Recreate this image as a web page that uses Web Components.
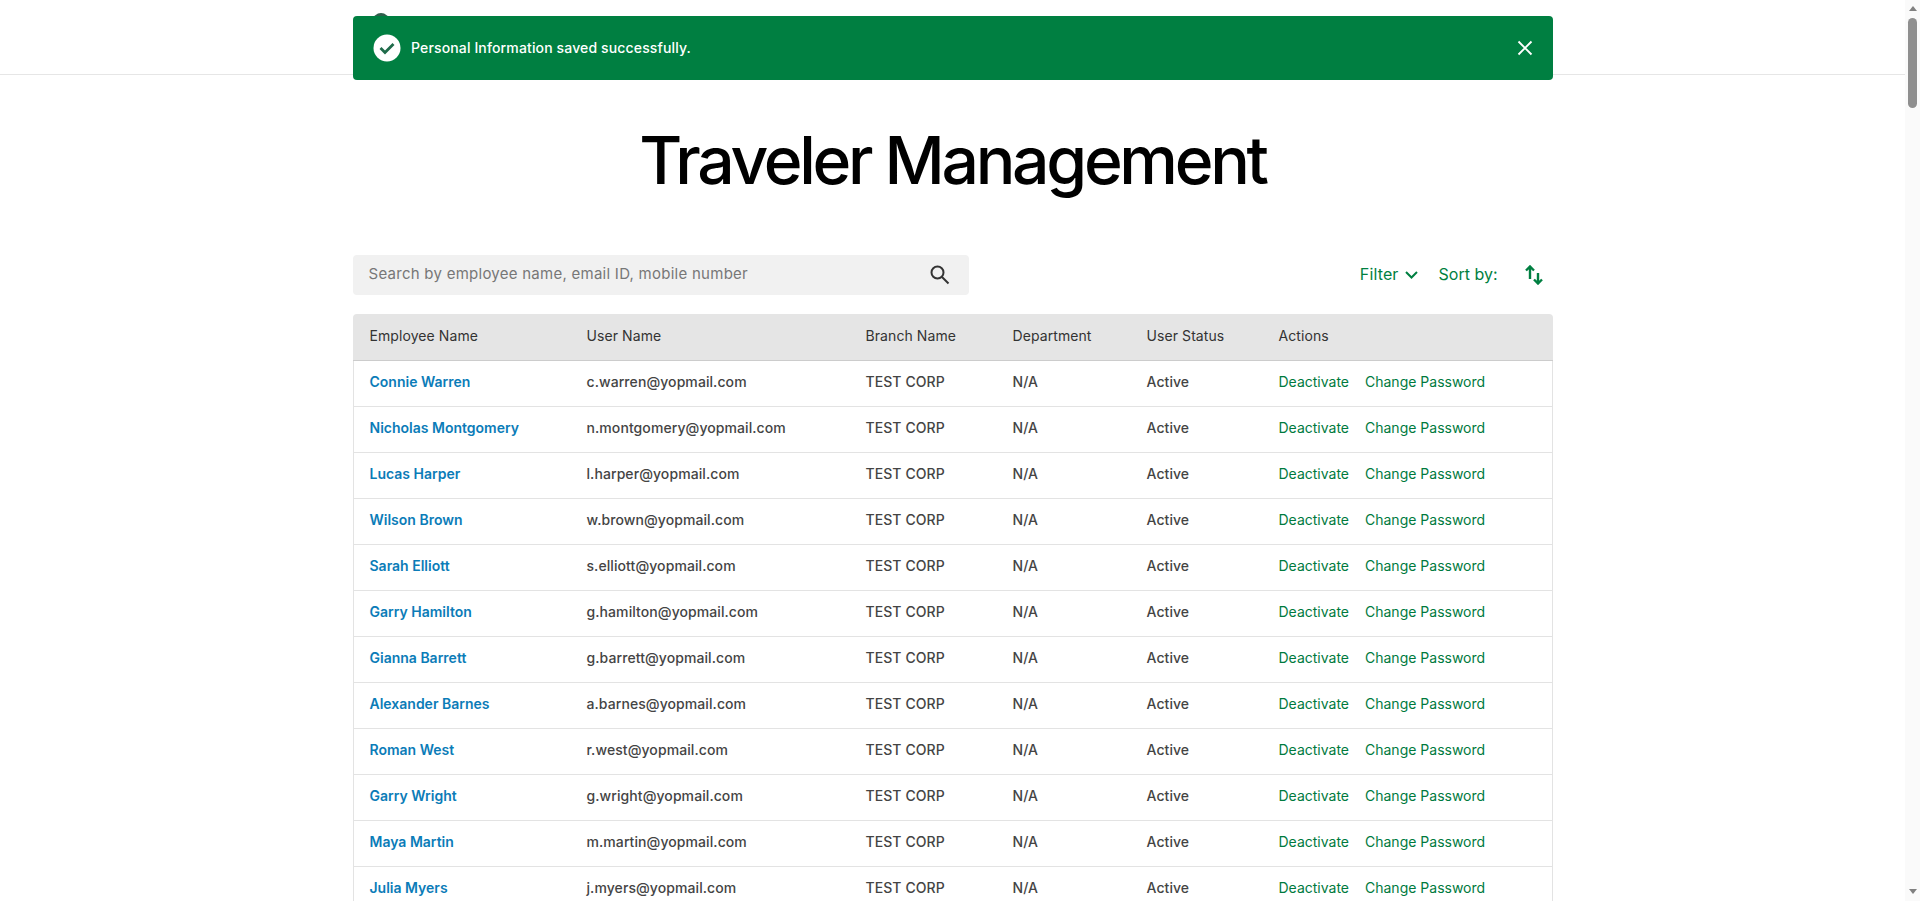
<!doctype html>
<html><head><meta charset="utf-8"><title>Traveler Management</title>
<style>
html,body{margin:0;height:901px;overflow:hidden;background:#fff}
body{font-family:Inter,"Noto Sans",sans-serif;color:#333}
</style></head><body>
<app-shell>
  <site-header slot="header"></site-header>
  <toast-banner slot="toast" message="Personal Information saved successfully."></toast-banner>
  <page-title>Traveler Management</page-title>
  <tool-bar></tool-bar>
  <traveler-table></traveler-table>
</app-shell>
<script>
class AppShell extends HTMLElement{constructor(){super();this.attachShadow({mode:'open'}).innerHTML=`
<style>
:host{display:flex;height:901px;width:1920px;overflow:hidden}
.page{flex:1;min-width:0;position:relative;overflow:hidden}
.wrap{width:1200px;margin:0 auto}
.toast{position:absolute;left:353px;top:16px;width:1200px}
</style>
<div class="page">
  <slot name="header"></slot>
  <div class="toast"><slot name="toast"></slot></div>
  <div class="wrap"><slot></slot></div>
</div>
<scroll-rail></scroll-rail>`}}
class ScrollRail extends HTMLElement{constructor(){super();this.attachShadow({mode:'open'}).innerHTML=`
<style>
:host{display:flex;flex-direction:column;align-items:center;width:15px;background:#fafafa;flex:none;height:901px;box-sizing:border-box}
.a{width:0;height:0;border-left:4.5px solid transparent;border-right:4.5px solid transparent;margin-top:6px}
.up{border-bottom:5px solid #808080}
.down{border-top:5px solid #808080;margin:auto 0 7px}
.thumb{width:9px;height:90px;background:#8f8f8f;border-radius:5px;margin-top:7px;flex:none}
</style><div class="a up"></div><div class="thumb"></div><div class="a down"></div>`}}
class SiteHeader extends HTMLElement{constructor(){super();this.attachShadow({mode:'open'}).innerHTML=`
<style>:host{display:block;height:74px;border-bottom:1px solid #e6e6e6;position:relative}
.logo{position:absolute;left:373px;top:13px;width:16px;height:16px;border-radius:50%;background:#2f5f4c}</style><div class="logo"></div>`}}
class ToastBanner extends HTMLElement{constructor(){super();const m=this.getAttribute('message');this.attachShadow({mode:'open'}).innerHTML=`
<style>:host{display:flex;align-items:center;height:64px;background:#007f41;border-radius:4px;color:#fff;padding:0 20px;box-sizing:border-box;font-size:14px;font-weight:500;gap:10px;letter-spacing:.14px}
.msg{flex:1;padding-bottom:2px}.x{display:block}</style>
<svg width="28" height="28" viewBox="0 0 28 28"><circle cx="14" cy="14" r="13.500" fill="#fff"/><path d="M7.500 14l4.500 4.500 8.500-8.500" fill="none" stroke="#1f6b4a" stroke-width="2.800"/></svg>
<span class="msg">${m}</span>
<svg class="x" width="16" height="16" viewBox="0 0 16 16"><path d="M1.500 1.500l13 13M14.500 1.500l-13 13" stroke="#fff" stroke-width="1.900"/></svg>`}}
class PageTitle extends HTMLElement{constructor(){super();this.attachShadow({mode:'open'}).innerHTML=`
<style>:host{display:block;text-align:center;font-family:Inter,sans-serif;font-size:66px;font-weight:550;line-height:80px;letter-spacing:-3.300px;color:#000;padding-top:45px;height:180px;box-sizing:border-box}</style><slot></slot>`}}
class ToolBar extends HTMLElement{constructor(){super();this.attachShadow({mode:'open'}).innerHTML=`
<style>:host{display:flex;align-items:center;justify-content:space-between;height:40px;margin-bottom:19px;color:#007f41;font-size:16px}
.search{width:616px;height:40px;background:#f1f1f1;border-radius:4px;display:flex;align-items:center;justify-content:space-between;padding:0 16px;box-sizing:border-box;color:#777;font-size:15px;letter-spacing:.26px}
.search span,.r span{padding-bottom:3px}
.r{display:flex;align-items:center}
.f{letter-spacing:.15px}
svg{display:block;flex:none}
</style>
<div class="search"><span>Search by employee name, email ID, mobile number</span>
<svg width="20" height="20" viewBox="0 0 20 20" style="margin-right:3px"><circle cx="7.500" cy="7.500" r="6" fill="none" stroke="#333" stroke-width="2"/><path d="M12 12l6.500 6.500" stroke="#333" stroke-width="2"/></svg></div>
<div class="r"><span class="f">Filter</span><svg style="margin:0 21px 0 6px" width="13" height="10" viewBox="0 0 13 10"><path d="M1 2l5.500 5.500L12 2" fill="none" stroke="#007f41" stroke-width="2"/></svg><span>Sort by:</span>
<svg style="margin:0 10px 0 27px" width="18" height="20" viewBox="0 0 18 20"><path d="M5 14V1.500M1 5.500l4-4 4 4M13 8v10.500M9 14.500l4 4 4-4" fill="none" stroke="#007f41" stroke-width="2.400"/></svg></div>`}}
const rows=[["Connie Warren","c.warren"],["Nicholas Montgomery","n.montgomery"],["Lucas Harper","l.harper"],["Wilson Brown","w.brown"],["Sarah Elliott","s.elliott"],["Garry Hamilton","g.hamilton"],["Gianna Barrett","g.barrett"],["Alexander Barnes","a.barnes"],["Roman West","r.west"],["Garry Wright","g.wright"],["Maya Martin","m.martin"],["Julia Myers","j.myers"]];
class TravelerTable extends HTMLElement{constructor(){super();this.attachShadow({mode:'open'}).innerHTML=`
<style>:host{display:block;font-size:14px}
.row{display:grid;grid-template-columns:217px 279px 147px 134px 132px 1fr;height:46px;align-items:center;padding-left:16px;border:1px solid #e3e3e3;border-top:0;box-sizing:border-box;font-weight:500;color:#444;letter-spacing:.08px}
.row>span{padding-bottom:4px}
.head{background:#e5e5e5;color:#333;font-weight:400;border:0;border-bottom:1px solid #ccc;border-radius:4px 4px 0 0;height:47px;padding-left:17px}
.n{color:#0b7cb8;font-weight:600;letter-spacing:0}.g{color:#007a3e;font-weight:400;letter-spacing:0}
.act{display:flex;gap:16px}
</style>
<div class="row head"><span>Employee Name</span><span>User Name</span><span>Branch Name</span><span>Department</span><span>User Status</span><span>Actions</span></div>
${rows.map(r=>`<div class="row"><span class="n">${r[0]}</span><span>${r[1]}@yopmail.com</span><span>TEST CORP</span><span>N/A</span><span>Active</span><span class="act g"><span>Deactivate</span><span>Change Password</span></span></div>`).join('')}`}}
customElements.define('scroll-rail',ScrollRail);customElements.define('app-shell',AppShell);customElements.define('site-header',SiteHeader);customElements.define('toast-banner',ToastBanner);customElements.define('page-title',PageTitle);customElements.define('tool-bar',ToolBar);customElements.define('traveler-table',TravelerTable);
</script></body></html>
